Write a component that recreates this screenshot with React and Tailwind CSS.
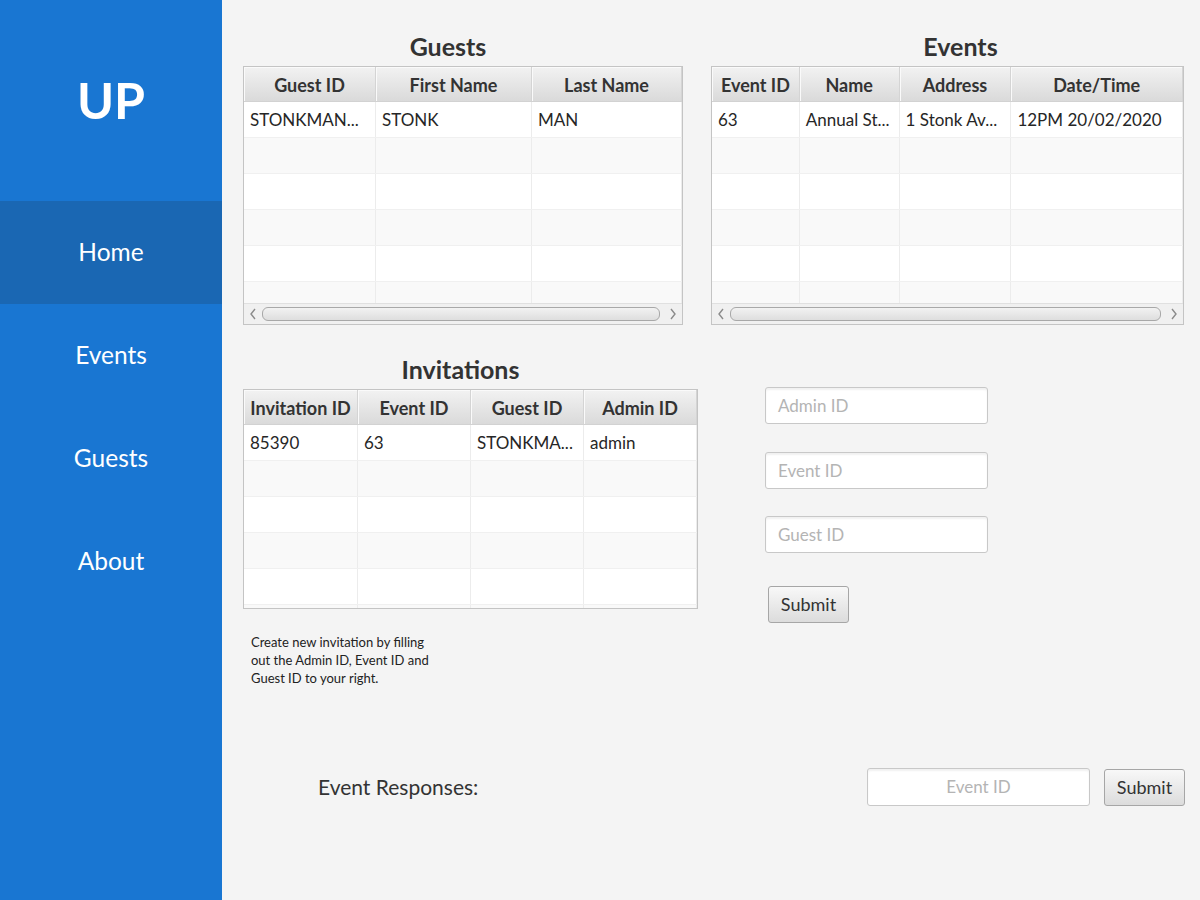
import React from "react";

const FONT = { fontFamily: '"Lato", "Open Sans", sans-serif' };

function Table({ width, height, cols, rows, bodyRows, scroll }) {
  return (
    <div
      className="flex flex-col border border-[#c4c4c4] bg-white overflow-hidden"
      style={{ width, height }}
    >
      <div className="flex h-[35px] shrink-0 bg-gradient-to-b from-[#f2f2f2] to-[#dadada] border-b border-[#d2d2d2]">
        {cols.map((c, i) => (
          <div
            key={i}
            className="flex items-center justify-center pt-[2px] border-r border-[#d4d4d4] shadow-[inset_1px_1px_0_#fafafa] text-[18px] font-bold text-[#333] whitespace-nowrap overflow-hidden"
            style={{ width: c.w }}
          >
            {c.label}
          </div>
        ))}
        <div className="flex-1" />
      </div>
      <div className="flex-1 overflow-hidden">
        {Array.from({ length: bodyRows }).map((_, r) => (
          <div
            key={r}
            className={`flex h-[36px] border-b border-[#f0f0f0] ${r % 2 === 1 ? "bg-[#f9f9f9]" : "bg-white"}`}
          >
            {cols.map((c, i) => (
              <div
                key={i}
                className="flex items-center pl-[6px] border-r border-[#ececec] text-[17px] text-[#262626] whitespace-nowrap overflow-hidden"
                style={{ width: c.w }}
              >
                {rows[r] ? rows[r][i] : ""}
              </div>
            ))}
            <div className="flex-1" />
          </div>
        ))}
      </div>
      {scroll && (
        <div className="flex items-center h-[21px] shrink-0 bg-[#f0f0f0] border-t border-[#e0e0e0] px-[4px] gap-[4px]">
          <svg width="10" height="12" viewBox="0 0 10 12" className="shrink-0">
            <path d="M7 1 L3 6 L7 11" stroke="#8a8a8a" strokeWidth="1.4" fill="none" />
          </svg>
          <div className="flex-1 h-[14px] rounded-[6px] border border-[#a8a8a8] bg-gradient-to-b from-[#f2f2f2] to-[#dedede]" />
          <svg width="10" height="12" viewBox="0 0 10 12" className="shrink-0 ml-[4px]">
            <path d="M3 1 L7 6 L3 11" stroke="#8a8a8a" strokeWidth="1.4" fill="none" />
          </svg>
        </div>
      )}
    </div>
  );
}

function Input({ placeholder, className = "", center }) {
  return (
    <div
      className={`flex items-center bg-white border border-[#c8c8c8] rounded-[3px] shadow-[inset_0_2px_2px_rgba(0,0,0,0.06)] text-[17px] text-[#b4b4b4] ${center ? "justify-center" : "pl-[12px]"} ${className}`}
    >
      {placeholder}
    </div>
  );
}

function Button({ className = "" }) {
  return (
    <div
      className={`flex items-center justify-center rounded-[3px] border border-[#a6a6a6] bg-gradient-to-b from-[#f8f8f8] to-[#dcdcdc] text-[18px] text-[#333] ${className}`}
    >
      Submit
    </div>
  );
}

export default function App() {
  return (
    <div className="flex w-[1200px] h-[900px] bg-[#f4f4f4]" style={FONT}>
      <aside className="w-[222px] shrink-0 bg-[#1976d2] flex flex-col text-white">
        <div className="h-[201px] flex items-center justify-center text-[50px] font-bold">UP</div>
        <div className="h-[103px] flex items-center justify-center text-[24.5px] bg-[#1a67b3]">Home</div>
        <div className="h-[103px] flex items-center justify-center text-[24.5px]">Events</div>
        <div className="h-[103px] flex items-center justify-center text-[24.5px]">Guests</div>
        <div className="h-[103px] flex items-center justify-center text-[24.5px]">About</div>
      </aside>
      <main className="flex-1 flex flex-col pt-[32px] pl-[21px]">
        <div className="flex gap-[28px]">
          <div className="flex flex-col w-[440px]">
            <div className="h-[28px] leading-[28px] text-center text-[25px] font-bold text-[#333] mb-[6px] pr-[30px]">Guests</div>
            <Table
              width={440}
              height={259}
              scroll
              bodyRows={6}
              cols={[
                { label: "Guest ID", w: 132 },
                { label: "First Name", w: 156 },
                { label: "Last Name", w: 150 },
              ]}
              rows={[["STONKMAN...", "STONK", "MAN"]]}
            />
          </div>
          <div className="flex flex-col w-[473px]">
            <div className="h-[28px] leading-[28px] text-center text-[25px] font-bold text-[#333] mb-[6px] pl-[26px]">Events</div>
            <Table
              width={473}
              height={259}
              scroll
              bodyRows={6}
              cols={[
                { label: "Event ID", w: 88 },
                { label: "Name", w: 100 },
                { label: "Address", w: 112 },
                { label: "Date/Time", w: 172 },
              ]}
              rows={[["63", "Annual St...", "1 Stonk Av...", "12PM 20/02/2020"]]}
            />
          </div>
        </div>
        <div className="flex mt-[30px]">
          <div className="flex flex-col w-[455px]">
            <div className="h-[28px] leading-[28px] text-center text-[25px] font-bold text-[#333] mb-[6px] pr-[20px]">Invitations</div>
            <Table
              width={455}
              height={220}
              bodyRows={6}
              cols={[
                { label: "Invitation ID", w: 114 },
                { label: "Event ID", w: 113 },
                { label: "Guest ID", w: 113 },
                { label: "Admin ID", w: 113 },
              ]}
              rows={[["85390", "63", "STONKMA...", "admin"]]}
            />
            <div className="mt-[24px] pl-[8px] text-[13px] leading-[18px] text-[#222] whitespace-nowrap">
              Create new invitation by filling
              <br />
              out the Admin ID, Event ID and
              <br />
              Guest ID to your right.
            </div>
          </div>
          <div className="flex flex-col ml-[67px] pt-[32px]">
            <Input placeholder="Admin ID" className="w-[223px] h-[37px]" />
            <Input placeholder="Event ID" className="w-[223px] h-[37px] mt-[28px]" />
            <Input placeholder="Guest ID" className="w-[223px] h-[37px] mt-[27px]" />
            <Button className="w-[81px] h-[37px] mt-[33px] ml-[3px]" />
          </div>
        </div>
        <div className="flex items-center mt-[81px] pr-[15px]">
          <div className="ml-[75px] text-[21px] text-[#333]">Event Responses:</div>
          <div className="flex-1" />
          <Input placeholder="Event ID" center className="w-[223px] h-[38px]" />
          <Button className="w-[81px] h-[37px] ml-[14px]" />
        </div>
      </main>
    </div>
  );
}
